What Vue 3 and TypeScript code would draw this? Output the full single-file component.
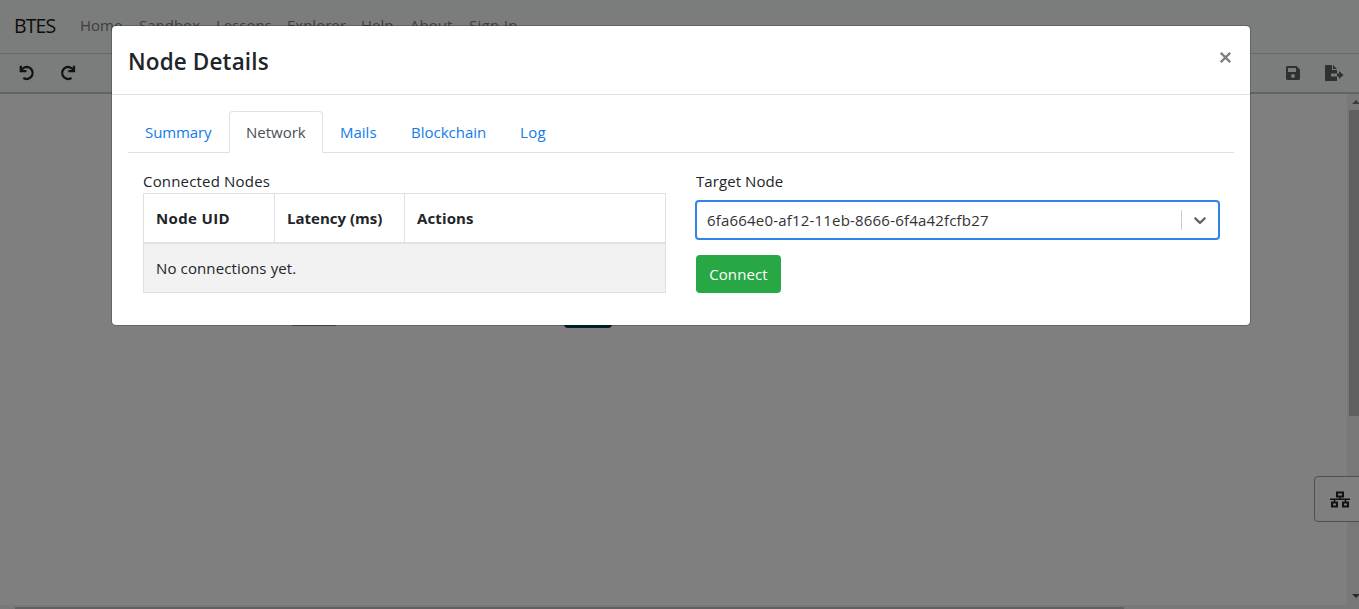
<script setup lang="ts">
import { ref } from 'vue'

const links: { label: string; cls: string }[] = [
  { label: 'Home', cls: 'home' },
  { label: 'Sandbox', cls: 'sandbox' },
  { label: 'Lessons', cls: 'lessons' },
  { label: 'Explorer', cls: 'explorer' },
  { label: 'Help', cls: 'help' },
  { label: 'About', cls: 'about' },
  { label: 'Sign In', cls: 'signin' },
]
const tabs: { label: string; cls: string }[] = [
  { label: 'Summary', cls: 't-summary' },
  { label: 'Network', cls: 't-network' },
  { label: 'Mails', cls: 't-mails' },
  { label: 'Blockchain', cls: 't-blockchain' },
  { label: 'Log', cls: 't-log' },
]
const active = ref('Network')
const target = ref('6fa664e0-af12-11eb-8666-6f4a42fcfb27')
</script>

<template>
  <div class="page">
    <nav class="navbar">
      <span class="brand">BTES</span>
      <a v-for="l in links" :key="l.label" class="link" :class="l.cls">{{ l.label }}</a>
    </nav>
    <div class="toolbar">
      <svg class="undo" width="18" height="18" viewBox="0 0 18 18" fill="none" stroke="#212529" stroke-width="2.3">
        <path d="M2.300 1.200V6.600H8M2.600 6.300C4 3.700 6.300 2.400 9 2.400a6.100 6.100 0 1 1-4.200 11.200" />
      </svg>
      <svg class="redo" width="18" height="18" viewBox="0 0 18 18" fill="none" stroke="#212529" stroke-width="2.3">
        <path d="M15.700 1.200V6.600H10M15.400 6.300C14 3.700 11.700 2.400 9 2.400a6.100 6.100 0 1 0 4.200 11.200" />
      </svg>
      <span class="grow"></span>
      <svg class="save" width="14" height="14" viewBox="0 0 14 14" fill="#5f6060">
        <path fill-rule="evenodd" d="M1.500 0h9L14 3.500v9a1.500 1.500 0 0 1-1.500 1.500h-11A1.500 1.500 0 0 1 0 12.500v-11A1.500 1.500 0 0 1 1.500 0ZM2 2v4h8V2ZM7 8a2 2 0 1 0 0 4 2 2 0 0 0 0-4Z" />
      </svg>
      <svg class="export" width="19" height="16" viewBox="0 0 19 16" fill="#5f6060">
        <path d="M0 0h7v5h5v3.500H6v3h6V16H0ZM8 0l4 4H8ZM12 8.500h2V6l4.500 4-4.500 4v-2.500h-2Z" />
      </svg>
    </div>
    <main class="canvas">
      <div class="chip"></div>
      <div class="node"></div>
      <div class="vtrack">
        <i class="up"></i>
        <i class="vthumb"></i>
        <i class="down"></i>
      </div>
      <div class="htrack"><i class="hthumb"></i></div>
      <button class="drawer">
        <svg width="20" height="17" viewBox="0 0 20 17" fill="none" stroke="#212529" stroke-width="2">
          <path d="M7 1.500h6v4H7ZM2 11.500h5v4H2ZM13 11.500h5v4h-5Z" />
          <path stroke-width="1.500" d="M0 8.300h20M10 6v2M4.500 8v3M15.500 8v3" />
        </svg>
      </button>
    </main>
    <div class="backdrop"></div>
    <section class="modal" role="dialog">
      <header class="head">
        <h4><span>Node Details</span></h4>
        <button class="close" aria-label="Close">
          <svg width="11" height="11" viewBox="0 0 11 11" stroke="#7f7f7f" stroke-width="2.300"><path d="M.800.800l9.400 9.400M10.200.800.800 10.200" /></svg>
        </button>
      </header>
      <div class="body">
        <div class="tabs">
          <a v-for="t in tabs" :key="t.label" :class="[t.cls, { active: active === t.label }]" @click="active = t.label"><span>{{ t.label }}</span></a>
        </div>
        <div class="cols">
          <div class="left">
            <div class="label connected">Connected Nodes</div>
            <table>
              <thead>
                <tr><th class="c1">Node UID</th><th class="c2">Latency (ms)</th><th class="c3">Actions</th></tr>
              </thead>
              <tbody>
                <tr><td colspan="3">No connections yet.</td></tr>
              </tbody>
            </table>
          </div>
          <div class="right">
            <div class="label targetlabel">Target Node</div>
            <div class="select">
              <span class="value">{{ target }}</span>
              <i class="sep"></i>
              <svg width="20" height="20" viewBox="0 0 20 20" fill="#666"><path d="M4.516 7.548c.436-.446 1.043-.481 1.576 0L10 11.295l3.908-3.747c.533-.481 1.141-.446 1.574 0 .436.445.408 1.197 0 1.615-.406.418-4.695 4.502-4.695 4.502a1.095 1.095 0 0 1-1.576 0S4.924 9.581 4.516 9.163s-.436-1.170 0-1.615z" /></svg>
            </div>
            <button class="connect">Connect</button>
          </div>
        </div>
      </div>
    </section>
  </div>
</template>

<style>
html, body { margin: 0; overflow: hidden; }
</style>

<style scoped>
* { box-sizing: border-box; }
.page {
  position: relative; width: 1359px; height: 609px; overflow: hidden; background: #fff;
  font-family: "Open Sans", "Noto Sans", sans-serif; font-size: 15px; line-height: 24px; color: #212529;
  display: flex; flex-direction: column;
}
a, span, th, td, .label { white-space: nowrap; }
button { font: inherit; padding: 0; }
.navbar { height: 54px; flex: none; background: #f7faf9; border-bottom: 1px solid #d0d3d2; display: flex; align-items: center; padding: 0 0 3px 14px; }
.brand { font-size: 19.5px; color: #191a1a; width: 66px; letter-spacing: -.9px; padding-top: 2px; }
.link { color: #7d7f7e; flex: none; }
.home { width: 59px; } .sandbox { width: 77px; } .lessons { width: 71px; } .explorer { width: 74px; }
.help { width: 49px; } .about { width: 59px; } .signin { letter-spacing: .3px; }
.toolbar { height: 40px; flex: none; background: #f7faf9; border-bottom: 2px solid #c3c9c9; display: flex; align-items: center; padding: 0 15px 0 18px; }
.redo { margin-left: 23px; }
.undo { transform: translate(.5px, .5px); }
.redo { transform: translate(-.7px, .5px); }
.grow { flex: 1; }
.export { margin-left: 25px; }
.canvas { position: relative; flex: 1; }
.chip { position: absolute; left: 292px; top: 190px; width: 44px; height: 42px; background: #a0a0a0; }
.node { position: absolute; left: 564px; top: 190px; width: 48px; height: 44px; background: #033f50; border-radius: 4px; }
.vtrack { position: absolute; right: 0; top: 0; bottom: 0; width: 12px; background: #f1f1f1; }
.vthumb { position: absolute; left: 2px; right: 0; top: 16px; height: 306px; background: #c1c1c1; }
.up, .down { position: absolute; left: 5px; border: 4px solid transparent; }
.up { top: 2px; border-bottom-color: #777; }
.down { bottom: 7px; border-top-color: #505050; }
.htrack { position: absolute; left: 0; right: 0; bottom: 0; height: 4px; background: #f1f1f1; }
.hthumb { position: absolute; left: 15px; width: 1109px; top: 2px; height: 2px; background: #c1c1c1; }
.drawer { position: absolute; right: -4px; top: 382px; width: 49px; height: 46px; border: 1px solid #a0a0a0; border-radius: 4px; background: #fff; display: flex; align-items: center; padding-left: 15px; }
.backdrop { position: absolute; inset: 0; background: rgba(0, 0, 0, .5); }
.modal { position: absolute; left: 111px; top: 25px; width: 1140px; height: 301px; background: #fff; background-clip: padding-box; border: 1px solid rgba(0, 0, 0, .2); border-radius: 5px; }
.head { height: 69px; border-bottom: 1px solid #dee2e6; padding: 17px 19px 0 16px; display: flex; justify-content: space-between; align-items: flex-start; }
h4 { margin: 0; font-size: 22.5px; font-weight: 600; line-height: 37px; letter-spacing: .14px; }
.close { border: 0; background: none; width: 11px; height: 11px; display: flex; margin-top: 9px; }
.body { padding: 16px; }
.tabs { display: flex; border-bottom: 1px solid #dee2e6; height: 42px; width: 1106px; }
.tabs a { height: 42px; border: 1px solid transparent; border-radius: 4px 4px 0 0; padding: 8px 0 0 16px; color: #127bea; flex: none; }
.tabs a.active { color: #495057; background: #fff; border-color: #dee2e6 #dee2e6 #fff; }
.tabs .t-summary { width: 101px; letter-spacing: -.1px; }
.t-network { width: 94px; }
.t-mails { width: 71px; }
.t-blockchain { width: 109px; }
.tabs .t-log { width: 60px; letter-spacing: .3px; }
.cols { display: flex; gap: 30px; padding: 16px 15px 0; }
.left, .right { width: 523px; }
.label { height: 24px; line-height: 25px; }
.connected { letter-spacing: .18px; }
.targetlabel { letter-spacing: .08px; }
table { border-collapse: collapse; table-layout: fixed; width: 523px; height: 100px; }
th, td { border: 1px solid #dee2e6; padding: 0 12px; text-align: left; }
th { height: 49px; border-bottom-width: 2px; font-weight: 700; }
td { height: 50px; background: #f2f2f2; letter-spacing: .12px; }
.c1 { width: 131px; letter-spacing: .35px; }
.c2 { width: 130px; }
.c3 { letter-spacing: .12px; }
.select { width: 525px; height: 40px; margin: 7px 0 0 -1px; border: 2px solid #2f84e8; border-radius: 4px; display: flex; align-items: center; padding: 0 8px 0 10px; color: #333; }
.value { flex: 1; letter-spacing: .19px; }
.sep { width: 1px; height: 20px; background: #ccc; margin-right: 8px; }
.connect { margin-top: 15px; width: 85px; height: 38px; border: 0; border-radius: 4px; background: #28a745; color: #fff; display: block; letter-spacing: .12px; }
</style>
